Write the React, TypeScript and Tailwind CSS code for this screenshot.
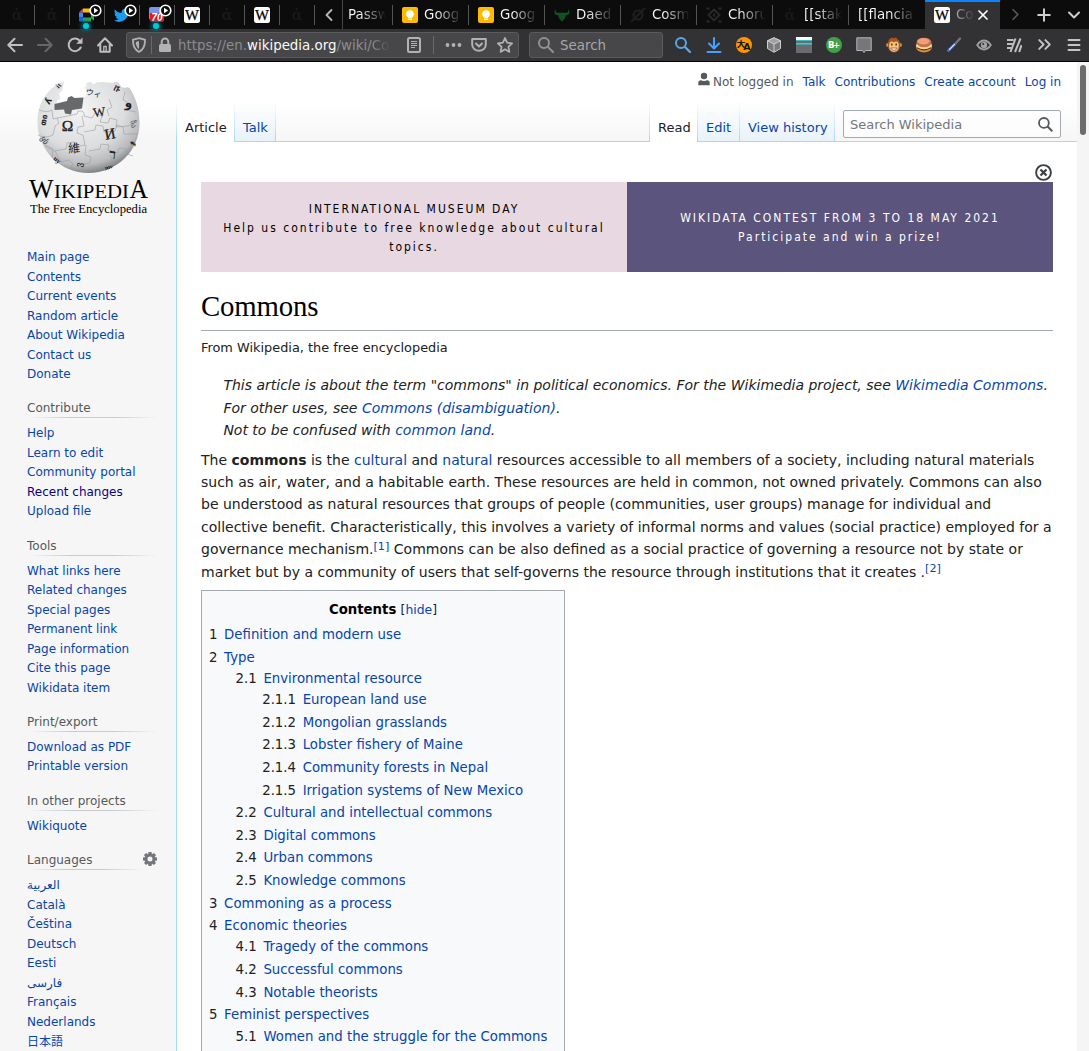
import React from "react";
import { ChevronLeft, ChevronRight, ChevronDown, ChevronsRight, Plus, X } from "lucide-react";

const sans = "font-['DejaVu_Sans','Noto_Sans_CJK_JP',sans-serif]";

function Play() {
  return (
    <svg className="absolute left-[10px] -top-[3px]" width="13" height="13" viewBox="0 0 13 13">
      <circle cx="6.5" cy="6.5" r="5.3" fill="#0c0c0d" stroke="#fff" strokeWidth="1.6" />
      <path d="M5 3.8v5.4l4.2-2.7z" fill="#fff" />
    </svg>
  );
}

function Glow() {
  return <span className="absolute left-[4px] top-[16px] h-[6px] w-[6px] rounded-full bg-[#00c8d7] shadow-[0_0_4px_2px_#046872]" />;
}

function WIcon() {
  return (
    <svg width="16" height="16" viewBox="0 0 16 16">
      <rect width="16" height="16" rx="2.5" fill="#fff" />
      <text x="8" y="12.600" textAnchor="middle" textLength="14" lengthAdjust="spacingAndGlyphs" fontSize="14" fontFamily="Liberation Serif" fill="#000" stroke="#000" strokeWidth=".25">W</text>
    </svg>
  );
}

function Alpha() {
  return (
    <svg width="16" height="16" viewBox="0 0 16 16">
      <text x="8" y="13" textAnchor="middle" fontSize="15.500" fontFamily="DejaVu Serif" fill="#1c1c1e">ἀ</text>
    </svg>
  );
}

function Meet() {
  return (
    <svg width="16" height="16" viewBox="0 0 16 16">
      <path d="M4 1.500v4H0z" fill="#ea4335" />
      <path d="M4 1.500h8v4H4z" fill="#fbbc04" />
      <path d="M0 5.500h4v5H0z" fill="#4285f4" />
      <path d="M0 10.500h4v4H1q-1 0-1-1z" fill="#1967d2" />
      <path d="M4 10.500h8v4H4zM12 5.500l3-2v10l-3-2z" fill="#34a853" />
    </svg>
  );
}

function Twitter() {
  return (
    <svg width="16" height="16" viewBox="0 0 24 24">
      <path fill="#1d9bf0" d="M23.6 5a9.800 9.800 0 0 1-2.800.8 5 5 0 0 0 2.200-2.700 9.800 9.800 0 0 1-3.100 1.200 4.900 4.900 0 0 0-8.400 4.500A14 14 0 0 1 1.400 3.600a4.900 4.900 0 0 0 1.500 6.500 4.900 4.900 0 0 1-2.200-.6 4.900 4.900 0 0 0 3.900 4.900 4.900 4.900 0 0 1-2.200.1 4.900 4.900 0 0 0 4.600 3.400A9.900 9.900 0 0 1 0 20a14 14 0 0 0 21.500-12.400A10 10 0 0 0 23.600 5z" />
    </svg>
  );
}

function Seventy() {
  return (
    <svg width="16" height="16" viewBox="0 0 16 16">
      <rect y="0" width="13" height="13" rx="2" fill="#7b93e8" />
      <path d="M1 6h14v7q0 2-2 2H3q-2 0-2-2z" fill="#e01b24" />
      <text x="8" y="14" textAnchor="middle" fontSize="10" fontWeight="bold" fontStyle="italic" fontFamily="Liberation Sans" fill="#fff">70</text>
    </svg>
  );
}

function Bulb() {
  return (
    <svg width="16" height="16" viewBox="0 0 16 16">
      <rect width="16" height="16" rx="2" fill="#ffb900" />
      <circle cx="8" cy="7" r="3.800" fill="#fff" />
      <path d="M6 8h4v2.500H6zM6 11.500h4v1.500H6z" fill="#fff" />
    </svg>
  );
}

function Bull() {
  return (
    <svg width="16" height="16" viewBox="0 0 16 16" fill="#12521f">
      <path d="M2 2C.8 5 2.500 6 5.500 5.800h5C13.500 6 15.200 5 14 2c3 3.500 1.500 6-2 6.300L10.500 12 8 14.500 5.500 12 4 8.300C.5 8-1 5.500 2 2z" />
    </svg>
  );
}

function Cosma() {
  return (
    <svg width="16" height="16" viewBox="0 0 16 16" fill="none" stroke="#1f1f20" strokeWidth="2.200">
      <circle cx="8" cy="8" r="4.500" />
      <path d="M1 15 15 1" />
    </svg>
  );
}

function Chorus() {
  return (
    <svg width="16" height="16" viewBox="0 0 16 16" fill="none" stroke="#2b2b2c" strokeWidth="1.800">
      <path d="m8 2.500 5.500 5.500L8 13.500 2.500 8z" />
      <path d="M.5 1.500h3M12.500 1.500h3M.5 14.500h3M12.500 14.500h3M8 6.500v3" />
    </svg>
  );
}

function Pinned({ children }: { children: React.ReactNode }) {
  return (
    <div className="flex h-[29px] w-[35px] shrink-0 items-center pl-[9px]">
      <div className="relative flex h-4 w-4">{children}</div>
    </div>
  );
}

function Sep({ full }: { full?: boolean }) {
  return <span className={full ? "-ml-px h-[29px] w-px shrink-0 bg-[#454546]" : "-ml-px h-5 w-px shrink-0 bg-[#555556]"} />;
}

function Tab({ icon, title, w }: { icon?: React.ReactNode; title: string; w: string }) {
  return (
    <div className={"flex h-[29px] shrink-0 items-center " + w}>
      {icon && <span className="mr-[6px] ml-[9px] flex h-4 w-4 shrink-0">{icon}</span>}
      <span
        className={
          "shrink-0 whitespace-nowrap bg-[linear-gradient(to_right,#f9f9fa_12px,#303031_34px,#0c0c0d_38px)] bg-clip-text text-[13.400px] leading-[20px] text-transparent " +
          (icon ? "w-[42px]" : "ml-[5px] w-[42px]")
        }
      >
        {title}
      </span>
    </div>
  );
}

function TabStrip() {
  const pinned = [
    <Alpha />,
    <Alpha />,
    <><Meet /><Play /><Glow /></>,
    <><Twitter /><Play /></>,
    <><Seventy /><Play /><Glow /></>,
    <WIcon />,
    <Alpha />,
    <WIcon />,
    <Alpha />,
  ];
  return (
    <div className="flex h-[29px] items-center bg-[#0c0c0d]">
      {pinned.map((p, i) => (
        <React.Fragment key={i}>
          <Pinned>{p}</Pinned>
          <Sep />
        </React.Fragment>
      ))}
      <div className="flex w-[28px] shrink-0 justify-center text-[#b8b8ba]">
        <ChevronLeft size={20} strokeWidth={2.200} />
      </div>
      <Sep full />
      <Tab title="Passw" w="w-[50px]" />
      <Sep />
      <Tab icon={<Bulb />} title="Goog" w="w-[76px]" />
      <Sep />
      <Tab icon={<Bulb />} title="Goog" w="w-[76px]" />
      <Sep />
      <Tab icon={<Bull />} title="Daed" w="w-[76px]" />
      <Sep />
      <Tab icon={<Cosma />} title="Cosm" w="w-[76px]" />
      <Sep />
      <Tab icon={<Chorus />} title="Choru" w="w-[76px]" />
      <Sep />
      <Tab icon={<Alpha />} title="[[stak" w="w-[76px]" />
      <Sep />
      <div className="flex w-[76px] shrink-0 pl-[9px]">
        <span className="w-[62px] whitespace-nowrap bg-[linear-gradient(to_right,#f9f9fa_32px,#303031_54px,#0c0c0d_58px)] bg-clip-text text-[13.400px] leading-[20px] text-transparent">[[flancia</span>
      </div>
      <div className="flex h-[29px] w-[75px] shrink-0 items-center border-t-2 border-[#0a84ff] bg-[#323234] pb-px">
        <span className="ml-[9px] flex shrink-0"><WIcon /></span>
        <span className="ml-[6px] w-[18px] shrink-0 whitespace-nowrap bg-gradient-to-r from-[#aaa] to-[#3d3d3f] bg-clip-text text-[13.400px] leading-[20px] text-transparent">Co</span>
        <X className="ml-[1px] shrink-0 text-white" size={16} strokeWidth={2.600} />
      </div>
      <div className="flex flex-1 items-center text-[#cfcfd1]">
        <ChevronRight className="ml-[6px] shrink-0 text-[#59595a]" size={19} strokeWidth={2.200} />
        <Plus className="ml-[9px] shrink-0" size={20} strokeWidth={2.400} />
        <ChevronDown className="ml-[10px] shrink-0" size={20} strokeWidth={2.400} />
      </div>
    </div>
  );
}

function Ico({ children, w = "w-[30px]" }: { children: React.ReactNode; w?: string }) {
  return <div className={"flex h-[30px] shrink-0 items-center justify-center " + w}>{children}</div>;
}

function Arrow({ flip, color }: { flip?: boolean; color: string }) {
  return (
    <svg width="16" height="16" viewBox="0 0 16 16" fill="none" stroke={color} strokeWidth="2" strokeLinecap="round" strokeLinejoin="round" className={flip ? "-scale-x-100" : ""}>
      <path d="M15 8H1.500M7.500 1.800 1.300 8l6.200 6.200" />
    </svg>
  );
}

function Toolbar() {
  return (
    <div className="flex h-[33px] items-center border-b-[1px] border-black bg-[#323234] pb-[1px]">
      <Ico><Arrow color="#bfbfc1" /></Ico>
      <Ico><Arrow color="#67676a" flip /></Ico>
      <Ico>
        <svg width="16" height="16" viewBox="0 0 16 16" fill="none" stroke="#bfbfc1" strokeWidth="2" strokeLinecap="round">
          <path d="M13.700 10.500A6.300 6.300 0 1 1 12.500 3.500L14 5" />
          <path d="M15.500 .5V6.800H9.200z" fill="#bfbfc1" stroke="none" />
        </svg>
      </Ico>
      <Ico>
        <svg width="16" height="16" viewBox="0 0 16 16" fill="none" stroke="#bfbfc1" strokeWidth="2" strokeLinecap="round" strokeLinejoin="round">
          <path d="M1 8.500 8 1.300l7 7.200M3.300 7.500V14.800h9.400V7.500" />
          <path d="M6.800 14.500V9.500h2.400v5" strokeWidth="1.300" />
        </svg>
      </Ico>
      <div className="ml-[6px] flex h-[26px] w-[393px] shrink-0 items-center rounded-[3px] border border-[#5b5b5e] bg-[#474749]">
        <svg className="ml-[4px] shrink-0" width="16" height="16" viewBox="0 0 16 16">
          <path d="M8 1.200 14 2.800C14.200 9 12 13 8 15 4 13 1.800 9 2 2.800z" fill="none" stroke="#b1b1b3" strokeWidth="1.800" />
          <path d="M8 4v8.200C5.800 10.500 4.700 8 4.700 5z" fill="#b1b1b3" />
        </svg>
        <span className="ml-[4px] h-[18px] w-px shrink-0 bg-[#69696c]" />
        <svg className="ml-[5px] shrink-0" width="16" height="16" viewBox="0 0 16 16">
          <rect x="2" y="7" width="12" height="8" rx="1.500" fill="#b1b1b3" />
          <path d="M4.700 7.500V4.800a3.300 3.300 0 0 1 6.600 0V7.500" fill="none" stroke="#b1b1b3" strokeWidth="2" />
        </svg>
        <span className="ml-[5px] w-[222px] shrink-0 whitespace-nowrap pt-[2px] text-[13.400px] leading-[22px] text-[#8d8d90]">
          https://en.<span className="text-[#f9f9fa]">wikipedia.org</span>/wiki/<span className="bg-gradient-to-r from-[#8d8d90] to-[#4f4f52] bg-clip-text text-transparent">Co</span>
        </span>
        <svg className="ml-[6px] shrink-0" width="16" height="16" viewBox="0 0 16 16" fill="none" stroke="#b1b1b3">
          <rect x="2" y="1" width="12" height="14" rx="1.500" strokeWidth="2" />
          <path d="M5 4.500h6M5 6.500h6M5 8.500h6M5 10.500h4" strokeWidth="1" />
        </svg>
        <span className="ml-[11px] h-[18px] w-px shrink-0 bg-[#69696c]" />
        <svg className="ml-[11px] shrink-0" width="17" height="16" viewBox="0 0 17 16" fill="#b1b1b3">
          <circle cx="2.500" cy="8" r="1.900" /><circle cx="8.500" cy="8" r="1.900" /><circle cx="14.500" cy="8" r="1.900" />
        </svg>
        <svg className="ml-[9px] shrink-0" width="16" height="16" viewBox="0 0 16 16" fill="none" stroke="#b1b1b3" strokeWidth="2" strokeLinecap="round" strokeLinejoin="round">
          <path d="M1.200 2h13.600v5.500a6.800 6.300 0 0 1-13.600 0z" />
          <path d="M5 6.500 8 9.500l3-3" />
        </svg>
        <svg className="ml-[10px] shrink-0" width="16" height="16" viewBox="0 0 16 16" fill="none" stroke="#b1b1b3" strokeWidth="1.800" strokeLinejoin="round">
          <path d="m8 1 2.100 4.700 5 .6-3.700 3.500 1 5.100L8 12.300 3.600 14.900l1-5.100L.9 6.300l5-.6z" />
        </svg>
      </div>
      <div className="ml-[10px] flex h-[26px] w-[134px] shrink-0 items-center rounded-[3px] border border-[#5b5b5e] bg-[#474749]">
        <svg className="ml-[8px]" width="16" height="16" viewBox="0 0 16 16" fill="none" stroke="#919194" strokeWidth="2" strokeLinecap="round">
          <circle cx="6" cy="6" r="5" /><path d="m10 10 5 5" />
        </svg>
        <span className="ml-[6px] pt-[2px] text-[13.400px] leading-[22px] text-[#a6a6a8]">Search</span>
      </div>
      <div className="ml-[5px] flex">
        <Ico>
          <svg width="16" height="16" viewBox="0 0 16 16" fill="none" stroke="#58a6e8" strokeWidth="2" strokeLinecap="round"><circle cx="6" cy="6" r="5" /><path d="m10 10 5 5" strokeWidth="2.400" /></svg>
        </Ico>
        <Ico w="w-[31px]">
          <svg width="16" height="16" viewBox="0 0 16 16" fill="none" stroke="#45a1ff" strokeWidth="2" strokeLinecap="round" strokeLinejoin="round"><path d="M8 1v10M3 6.500 8 11.500l5-5M1.500 15h13" /></svg>
        </Ico>
        <Ico>
          <svg width="16" height="16" viewBox="0 0 16 16">
            <circle cx="8" cy="8" r="8" fill="#ff9500" />
            <text x="5" y="10" textAnchor="middle" fontSize="8.500" fontWeight="bold" fontFamily="Noto Sans CJK SC" fill="#161616">大</text>
            <text x="11" y="12.500" textAnchor="middle" fontSize="9.500" fontWeight="bold" fontFamily="DejaVu Sans" fill="#161616">A</text>
          </svg>
        </Ico>
        <Ico>
          <svg width="16" height="16" viewBox="0 0 16 16" stroke="#cfcfcf" strokeWidth="1" strokeLinejoin="round">
            <path d="M8 .8 14.500 3.800v7.700L8 15.300 1.500 11.500V3.800z" fill="#7b7b7d" />
            <path d="M1.500 3.800 8 7l6.500-3.200L8 .8z" fill="#a0a0a0" /><path d="M8 7v8" />
          </svg>
        </Ico>
        <Ico>
          <svg width="16" height="16" viewBox="0 0 16 16"><path fill="#6c6c6e" d="M0 0h16v16H0z" /><path fill="#fff" d="M0 0h16v3H0z" /><path fill="#22d7e0" d="M0 3h16v.7H0zM0 6h16v1.500H0z" /></svg>
        </Ico>
        <Ico>
          <svg width="16" height="16" viewBox="0 0 16 16"><circle cx="8" cy="8" r="8" fill="#43a047" /><text x="8" y="11" textAnchor="middle" fontSize="8.500" fontWeight="bold" fontFamily="DejaVu Sans" fill="#fff" textLength="12">B+</text></svg>
        </Ico>
        <Ico>
          <svg width="16" height="16" viewBox="0 0 16 16"><path d="M.8.800h14.400v12.700H9.500L8 15.500 6.500 13.500H.8z" fill="#777779" stroke="#b5b5b5" /></svg>
        </Ico>
        <Ico>
          <svg width="16" height="16" viewBox="0 0 16 16">
            <circle cx="2" cy="8" r="2" fill="#d18a41" /><circle cx="14" cy="8" r="2" fill="#d18a41" />
            <path d="M4 1.500 6.500.5 8 1.500l2-1.300L11 2c3 1.500 3 4 3 7s-2 6.500-6 6.500S2 12 2 9s0-5.500 2-7.500z" fill="#a9561e" />
            <path d="M3.500 6q2-2.500 4.500-.5Q10.500 3.500 12.500 6q.5 3 0 6-2 3-4.500 3T3.500 12q-.8-3 0-6z" fill="#f6c67d" />
            <path d="M5.200 6.500h1.300v2H5.200zM9.500 6.500h1.300v2H9.500z" fill="#222" /><path d="M4.800 11h6.400Q10.500 13.300 8 13.300T4.800 11z" fill="#fff" stroke="#8a4418" strokeWidth=".7" />
          </svg>
        </Ico>
        <Ico>
          <svg width="16" height="16" viewBox="0 0 16 16">
            <ellipse cx="8" cy="10.500" rx="7.800" ry="5" fill="#d98e3c" /><ellipse cx="8" cy="8.500" rx="8" ry="4.500" fill="#f6e0a0" />
            <ellipse cx="8" cy="5.500" rx="7.500" ry="4.800" fill="#c96f48" /><ellipse cx="7.500" cy="4.300" rx="6" ry="3.200" fill="#ee9f7a" /><path d="M.8 10.800q7.200 4 14.400 0" stroke="#6d3519" strokeWidth="1.300" fill="none" />
          </svg>
        </Ico>
        <Ico>
          <svg width="16" height="16" viewBox="0 0 16 16" strokeLinecap="round"><path d="m9.500 6.500 4.500-5" stroke="#77777b" strokeWidth="2.200" /><path d="M2.500 13.500 9 7" stroke="#4a6fe0" strokeWidth="2.800" /><path d="m3.500 12.300 5-5" stroke="#dbe4ff" strokeWidth="1.200" /></svg>
        </Ico>
        <Ico>
          <svg width="16" height="16" viewBox="0 0 16 16"><path d="M1.200 8Q4.200 3.500 8 3.500T14.800 8Q11.800 12.500 8 12.500T1.200 8z" fill="none" stroke="#a1a1a3" strokeWidth="1.800" /><circle cx="8" cy="8" r="3.200" fill="#a1a1a3" /><circle cx="7.200" cy="7" r="1" fill="#323234" /></svg>
        </Ico>
        <Ico>
          <svg width="16" height="16" viewBox="0 0 16 16" stroke="#c0c0c2" strokeWidth="2" fill="none"><path d="M1 3h6.500M1 7h5.500M1 11h4M4.500 15 9.500 1.500M9 15 14.500 1.500M13.200 15l2.300-7" /></svg>
        </Ico>
        <Ico><ChevronsRight className="text-[#c4c4c6]" size={21} strokeWidth={2.200} /></Ico>
        <Ico><svg width="16" height="16" viewBox="0 0 16 16"><path d="M2.500 3h11M2.500 8h11M2.500 13h11" stroke="#c4c4c6" strokeWidth="2" strokeLinecap="round" /></svg></Ico>
      </div>
    </div>
  );
}

function Logo() {
  const serif = "Liberation Serif";
  return (
    <svg className="ml-[24px] mt-[12px] block shrink-0" width="130" height="146" viewBox="24 74 130 146">
      <defs>
        <radialGradient id="globe" cx="0.42" cy="0.3" r="0.72">
          <stop offset="0" stopColor="#f4f4f4" /><stop offset="0.6" stopColor="#dcddde" /><stop offset="0.85" stopColor="#b9babc" /><stop offset="1" stopColor="#77797c" />
        </radialGradient>
      </defs>
      <path d="M64 81.500C47 87 37.500 104 37.500 121.500c0 29 23 51.500 51 51.500S139.500 151 139.500 123c0-15-4-26-10-35l-3-1-1 1-4-1-3-4.500-4-1-1 1.500-5-.5-6-.5-6 .5-3.500 2-1-2-3.500-.5-2.500 1.500.5 3-2 .5 2 4.500-1 5-4 2-12 3-13.500 4 1.500-5.500 3-1-1.500-5 3.500-4z" fill="url(#globe)" />
      <path d="M54.500 104l12.500-3 1-3.500 3.500-1.500 3 2 9-.500-1.500 11-10 1.500-1 4.500-6-1-1-4-9.500.500z" fill="#68696b" />
      <g fill="none" stroke="#9b9c9e" strokeWidth=".6">
        <path d="M39 110q8 3 13 0l1 9 4-1 2 5-4 3-2 9q-8 4-15 0" />
        <path d="M57 118q12-2 20-4l1-3q7-1 6 5l8 2 3-5 7 3-2 6 8 1 2-5 7 2-1 7 12-1 8-5" />
        <path d="M82 116l2 10-6 1-1 6 6 2 2 10-10 2-1-5-7 1-1 6-12 2-9-5" />
        <path d="M84 132l11-2 1-5 7 1 1 6 11-1 2-6 6 2 1 7 14 0" />
        <path d="M86 145l-1 10 6 2-1 6-7 1-1 8M89 151l11-2 1-5 8 1-1 5 10 3 1-5 7 1 1 5 6 2" />
        <path d="M55 151l6 11 8-2 4 4-3 5M109 99l3 8-5 3 2 6M125 92l-2 8 6 3-3 7 10 2M110 155l3 8-6 4-2 4M45 145l8 4-1 9" />
      </g>
      <g fontFamily={serif} fill="#202122" textAnchor="middle">
        <text x="67.500" y="130.500" fontSize="15.500" stroke="#202122" strokeWidth=".3">Ω</text>
        <text x="99" y="116.500" fontSize="13" transform="rotate(-8 99 111)" stroke="#202122" strokeWidth=".2">W</text>
        <text x="110" y="139" fontSize="15" transform="rotate(-10 110 134)" stroke="#202122" strokeWidth=".3">И</text>
        <text x="74" y="152.500" fontSize="12" fontFamily="Noto Sans CJK SC" transform="rotate(-5 74 148)">維</text>
        <text x="112.500" y="159" fontSize="14" fontWeight="bold" transform="rotate(8 112 155)">ר</text>
        <text x="94" y="96" fontSize="8" fontFamily="Noto Sans CJK JP" transform="rotate(12 94 92)">ウィ</text>
        <text x="117.500" y="91.500" fontSize="8" fontWeight="bold" transform="rotate(25 117 88)">ቩ</text>
        <text x="128.500" y="107" fontSize="12" fontFamily="DejaVu Sans" fontWeight="bold">و</text>
        <text x="134" y="127" fontSize="7.500" fontFamily="DejaVu Sans" transform="rotate(80 134 124)" fill="#555">ზა</text>
        <text x="44" y="122.500" fontSize="8" fontFamily="DejaVu Sans" fontWeight="bold" transform="rotate(-80 44 120)">თი</text>
        <text x="48" y="104" fontSize="9" fontFamily="DejaVu Sans" fontWeight="bold" transform="rotate(-60 48 101)">ʎ</text>
        <text x="45" y="143" fontSize="8" fontFamily="DejaVu Sans" transform="rotate(60 45 140)">ყს</text>
        <text x="80" y="167" fontSize="9" fontFamily="DejaVu Sans" transform="rotate(-80 80 165)">ვ</text>
        <text x="57" y="162" fontSize="7" fontWeight="bold" transform="rotate(40 57 160)">uy</text>
        <text x="132" y="145.500" fontSize="7.500" fontFamily="DejaVu Sans" fontWeight="bold" transform="rotate(-60 132 143)">ჯ</text>
        <text x="109" y="169" fontSize="6" fontWeight="bold" transform="rotate(-15 109 168)">mv</text>
        <text x="58" y="88" fontSize="7" fontWeight="bold" transform="rotate(-45 58 85)">it</text>
      </g>
      <g fontFamily={serif} fill="#000">
        <text x="29" y="197.700" fontSize="26.500" textLength="24.500" lengthAdjust="spacingAndGlyphs">W</text>
        <text x="54" y="197.700" fontSize="19.500" textLength="75" lengthAdjust="spacingAndGlyphs">IKIPEDI</text>
        <text x="129.500" y="197.700" fontSize="26.500" textLength="18.500" lengthAdjust="spacingAndGlyphs">A</text>
      </g>
      <text x="30" y="212.500" fontSize="13.500" fontFamily={serif} fill="#000" textLength="117" lengthAdjust="spacingAndGlyphs">The Free Encyclopedia</text>
    </svg>
  );
}

const portals: { title?: string; items: string[] }[] = [
  { items: ["Main page", "Contents", "Current events", "Random article", "About Wikipedia", "Contact us", "Donate"] },
  { title: "Contribute", items: ["Help", "Learn to edit", "Community portal", "Recent changes", "Upload file"] },
  { title: "Tools", items: ["What links here", "Related changes", "Special pages", "Permanent link", "Page information", "Cite this page", "Wikidata item"] },
  { title: "Print/export", items: ["Download as PDF", "Printable version"] },
  { title: "In other projects", items: ["Wikiquote"] },
  { title: "Languages", items: ["العربية", "Català", "Čeština", "Deutsch", "Eesti", "فارسی", "Français", "Nederlands", "日本語"] },
];

function Gear() {
  const teeth = [0, 45, 90, 135, 180, 225, 270, 315];
  return (
    <svg width="14" height="14" viewBox="0 0 14 14">
      <g fill="#72777d">{teeth.map((a) => <path key={a} d="M5.500 0h3l.5 3H5z" transform={`rotate(${a} 7 7)`} />)}</g>
      <circle cx="7" cy="7" r="3.800" fill="none" stroke="#72777d" strokeWidth="2.600" />
    </svg>
  );
}

function Sidebar() {
  return (
    <aside className="flex w-[176px] shrink-0 flex-col bg-[linear-gradient(#fff_0,#fff_40px,#f6f6f6_80px)]">
      <Logo />
      <nav className="mt-[28px] flex flex-col gap-[14.800px] text-[12px]">
        {portals.map((p, i) => (
          <section key={i} className="pl-[27px]">
            {p.title && (
              <div className="mb-[6px] flex">
                <h3 className={"shrink-0 text-[#54595d] " + (p.title === "Languages" ? "w-[116px]" : "w-[132px]")}>
                  <span className="block h-[18px] leading-[19px]">{p.title}</span>
                  <span className="block h-px bg-[linear-gradient(to_right,rgba(200,204,209,0)_0,#c8ccd1_33%,#c8ccd1_66%,rgba(200,204,209,0)_100%)]" />
                </h3>
                {p.title === "Languages" && <span className="h-[18px] pt-[1px]"><Gear /></span>}
              </div>
            )}
            {p.items.map((t) => (
              <a key={t} className={"block whitespace-nowrap leading-[19.500px] " + (t === "العربية" ? "h-[19.900px] " : t === "Nederlands" ? "h-[20.200px] " : "h-[19.500px] ") + (t === "Recent changes" ? "text-[#0b0080]" : "text-[#0645ad]")}>{t}</a>
            ))}
          </section>
        ))}
      </nav>
    </aside>
  );
}

function L({ children }: { children: React.ReactNode }) {
  return <a className="text-[#0645ad]">{children}</a>;
}

function Fade() {
  return <span className="h-10 w-px shrink-0 bg-gradient-to-b from-white to-[#a7d7f9]" />;
}

function PageTab({ label, active, w }: { label: string; active?: boolean; w: string }) {
  return (
    <div className={"flex shrink-0 whitespace-nowrap pt-[18px] pl-[8px] text-[13px] leading-[18px] " + w + (active ? " -mb-px h-[41px] bg-white text-[#202122]" : " h-10 bg-gradient-to-b from-white to-[#e8f2f8] text-[#0645ad]")}>
      {label}
    </div>
  );
}

function Header() {
  return (
    <header className="flex h-[80px] flex-col bg-[linear-gradient(#fff_50%,#f6f6f6_100%)]">
      <div className="flex h-[39px] shrink-0 items-start justify-end gap-[9px] pr-4 pt-[11px] text-[12px] leading-[18px] text-[#0645ad]">
        <span className="flex text-[#54595d]">
          <svg className="-mt-[1px] mr-[3px]" width="12" height="14" viewBox="0 0 12 14" fill="#54595d"><circle cx="6" cy="4" r="3.200" /><path d="M.3 13.300V11Q.3 8.300 3 8.300q3 1.500 6 0 2.700 0 2.700 2.700v2.300z" /></svg>
          Not logged in
        </span>
        <a>Talk</a><a>Contributions</a><a>Create account</a><a>Log in</a>
      </div>
      <div className="flex h-[41px] border-b border-[#a7d7f9]">
        <PageTab label="Article" active w="w-[57px]" />
        <Fade /><PageTab label="Talk" w="w-[40px]" /><Fade />
        <div className="flex-1" />
        <Fade /><PageTab label="Read" active w="w-[47px]" />
        <Fade /><PageTab label="Edit" w="w-[41px]" />
        <Fade /><PageTab label="View history" w="w-[94px]" /><Fade />
        <div className="mr-4 ml-[8px] mt-[9px] flex h-[28px] w-[218px] items-center justify-between rounded-[2px] border border-[#a2a9b1] bg-white/60 pr-[7px] pl-[6px] text-[13px] text-[#72777d]">
          <span className="pt-[1px]">Search Wikipedia</span>
          <svg width="15" height="15" viewBox="0 0 15 15" fill="none" stroke="#54595d" strokeWidth="1.800"><circle cx="5.900" cy="5.900" r="4.900" /><path d="m9.300 9.300 5 5" strokeWidth="2" /></svg>
        </div>
      </div>
    </header>
  );
}

type Node = { n: string; t: string; c?: Node[] };
const toc: Node[] = [
  { n: "1", t: "Definition and modern use" },
  {
    n: "2", t: "Type", c: [
      { n: "2.1", t: "Environmental resource", c: [
        { n: "2.1.1", t: "European land use" }, { n: "2.1.2", t: "Mongolian grasslands" }, { n: "2.1.3", t: "Lobster fishery of Maine" },
        { n: "2.1.4", t: "Community forests in Nepal" }, { n: "2.1.5", t: "Irrigation systems of New Mexico" },
      ] },
      { n: "2.2", t: "Cultural and intellectual commons" }, { n: "2.3", t: "Digital commons" }, { n: "2.4", t: "Urban commons" }, { n: "2.5", t: "Knowledge commons" },
    ],
  },
  { n: "3", t: "Commoning as a process" },
  { n: "4", t: "Economic theories", c: [{ n: "4.1", t: "Tragedy of the commons" }, { n: "4.2", t: "Successful commons" }, { n: "4.3", t: "Notable theorists" }] },
  { n: "5", t: "Feminist perspectives", c: [{ n: "5.1", t: "Women and the struggle for the Commons" }] },
];

function TocList({ nodes, nested }: { nodes: Node[]; nested?: boolean }) {
  return (
    <ul className={nested ? "ml-[26.600px]" : ""}>
      {nodes.map((x) => (
        <li key={x.n} className="mb-[1.330px]">
          <a className="flex"><span className="pr-[6.650px] text-[#202122]">{x.n}</span><span className="text-[#0645ad]">{x.t}</span></a>
          {x.c && <TocList nodes={x.c} nested />}
        </li>
      ))}
    </ul>
  );
}

function Article() {
  return (
    <main className="flex flex-1 flex-col bg-white pr-6 pl-6 text-[14px] leading-[22.400px] text-[#202122]">
      <div className="mt-[22px] flex h-[18px] justify-end">
        <svg width="19" height="18" viewBox="0 0 19 18" fill="none" stroke="#3c3f42" strokeWidth="1.900"><circle cx="9.500" cy="8.500" r="7.400" /><path d="m6.500 5.500 6 6M12.500 5.500l-6 6" strokeWidth="2.200" /></svg>
      </div>
      <div className="flex h-[90px] w-[852px] shrink-0 text-center font-['DejaVu_Sans_Condensed','DejaVu_Sans',sans-serif] text-[12px] leading-[19.200px] tracking-[2px] [font-stretch:condensed]">
        <div className="flex flex-1 flex-col justify-center whitespace-nowrap bg-[#e8d8e1] pt-[3px] text-black">
          <p>INTERNATIONAL MUSEUM DAY</p><p>Help us contribute to free knowledge about cultural</p><p>topics.</p>
        </div>
        <div className="flex flex-1 flex-col justify-center whitespace-nowrap bg-[#5b547d] pt-[2px] text-white"><p>WIKIDATA CONTEST FROM 3 TO 18 MAY 2021</p><p>Participate and win a prize!</p></div>
      </div>
      <h1 className="mt-[16px] h-[43px] w-[852px] border-b border-[#a2a9b1] font-['Liberation_Serif',serif] text-[28.800px] leading-[37px] tracking-[-0.150px] text-black">Commons</h1>
      <div className="mt-[6px] text-[12.880px] leading-[21px]">From Wikipedia, the free encyclopedia</div>
      <div className="mt-[16.300px] whitespace-nowrap pl-[22.400px] italic">
        <p>This article is about the term "commons" in political economics. For the Wikimedia project, see <L>Wikimedia Commons</L>.<br />For other uses, see <L>Commons (disambiguation)</L>.</p>
        <p>Not to be confused with <L>common land</L>.</p>
      </div>
      <p className="mt-[7.100px] whitespace-nowrap">
        The <b>commons</b> is the <L>cultural</L> and <L>natural</L> resources accessible to all members of a society, including natural materials<br />
        such as air, water, and a habitable earth. These resources are held in common, not owned privately. Commons can also<br />
        be understood as natural resources that groups of people (communities, user groups) manage for individual and<br />
        collective benefit. Characteristically, this involves a variety of informal norms and values (social practice) employed for a<br />
        governance mechanism.<sup className="align-[-1px] text-[11.200px] leading-none"><L>[1]</L></sup> Commons can be also defined as a social practice of governing a resource not by state or<br />
        market but by a community of users that self-governs the resource through institutions that it creates .<sup className="align-[-1px] text-[11.200px] leading-none"><L>[2]</L></sup>
      </p>
      <div className="mt-[7px] h-[520px] w-[364px] border border-[#a2a9b1] bg-[#f8f9fa] p-[7px] text-[13.300px] leading-[21.280px]">
        <div className="mb-[3.750px] pt-[0.850px] text-center"><b className="text-black">Contents</b> <span className="text-[12.400px]">[<L>hide</L>]</span></div>
        <TocList nodes={toc} />
      </div>
    </main>
  );
}

export default function App() {
  return (
    <div className={"flex h-[1051px] w-[1089px] flex-col overflow-hidden bg-white " + sans}>
      <TabStrip />
      <Toolbar />
      <div className="flex h-[989px] overflow-hidden">
        <Sidebar />
        <div className="w-px shrink-0 bg-[linear-gradient(#fff_0,#fff_40px,#a7d7f9_80px,#a7d7f9_100%)]" />
        <div className="flex w-[900px] shrink-0 flex-col">
          <Header />
          <Article />
        </div>
        <div className="flex w-[12px] shrink-0 justify-center bg-[#f5f5f5] pt-[3px]">
          <span className="h-[70px] w-[6px] rounded-full bg-[#6d6d6e]" />
        </div>
      </div>
    </div>
  );
}
